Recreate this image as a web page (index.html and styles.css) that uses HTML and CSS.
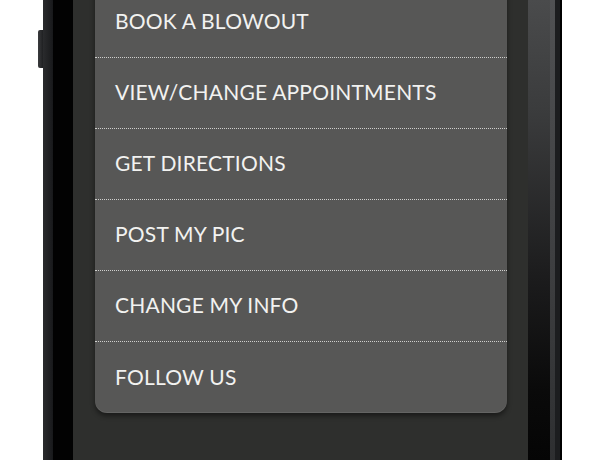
FILE: index.html
```html
<!DOCTYPE html>
<html lang="en">
<head>
<meta charset="utf-8">
<title>Menu</title>
<link rel="stylesheet" href="styles.css">
</head>
<body>
<div class="phone">
  <div class="side-button"></div>
  <div class="bezel-left-edge"></div>
  <div class="bezel-left"></div>
  <div class="screen">
    <nav class="menu">
      <a class="menu-item" href="#">BOOK A BLOWOUT</a>
      <a class="menu-item" href="#">VIEW/CHANGE APPOINTMENTS</a>
      <a class="menu-item" href="#">GET DIRECTIONS</a>
      <a class="menu-item" href="#">POST MY PIC</a>
      <a class="menu-item" href="#">CHANGE MY INFO</a>
      <a class="menu-item" href="#">FOLLOW US</a>
    </nav>
  </div>
  <div class="bezel-right"></div>
  <div class="bezel-right-strip"></div>
  <div class="bezel-right-edge"></div>
  <div class="bezel-right-rim"></div>
</div>
</body>
</html>
```
FILE: styles.css
```css
html, body {
  margin: 0;
  padding: 0;
  background: #ffffff;
  height: 460px;
  overflow: hidden;
}

.phone {
  position: relative;
  display: flex;
  margin-left: 43px;
  width: 519px;
  height: 460px;
}

.side-button {
  position: absolute;
  left: -5px;
  top: 30px;
  width: 5px;
  height: 38px;
  background: linear-gradient(90deg, #3a3b3d, #1f2022);
  border-radius: 2px 0 0 2px;
}

.bezel-left-edge {
  width: 10px;
  background: linear-gradient(90deg, #2a2b2d, #18191b);
}

.bezel-left {
  width: 20px;
  background: #020202;
}

.screen {
  flex: 1;
  background: #2e2f2d;
  padding: 0 21px 0 22px;
}

.menu {
  display: flex;
  flex-direction: column;
  margin-top: -13px;
  background: #575756;
  border-radius: 0 0 12px 12px;
  box-shadow: 0 3px 5px rgba(0, 0, 0, 0.45), inset 0 -1px 0 rgba(255, 255, 255, 0.08);
}

.menu-item {
  display: flex;
  align-items: center;
  height: 71px;
  padding: 0 0 3px 20px;
  box-sizing: border-box;
  border-bottom: 1px dotted #cfcfcd;
  color: #f2f2f0;
  text-decoration: none;
  font-family: "Lato", "Liberation Sans", sans-serif;
  font-size: 21px;
  letter-spacing: 0.2px;
}

.menu-item:last-child {
  border-bottom: none;
}

.bezel-right {
  width: 22px;
  background: linear-gradient(180deg, #4a4b4c 0%, #3a3b3c 25%, #1c1c1d 60%, #0a0a0a 85%, #050505 100%);
}

.bezel-right-strip {
  width: 5px;
  background: linear-gradient(180deg, #505153 0%, #3d3e40 60%, #2e2f31 100%);
}

.bezel-right-edge {
  width: 5px;
  background: #1c1d1f;
}

.bezel-right-rim {
  width: 2px;
  background: #000;
}
```
